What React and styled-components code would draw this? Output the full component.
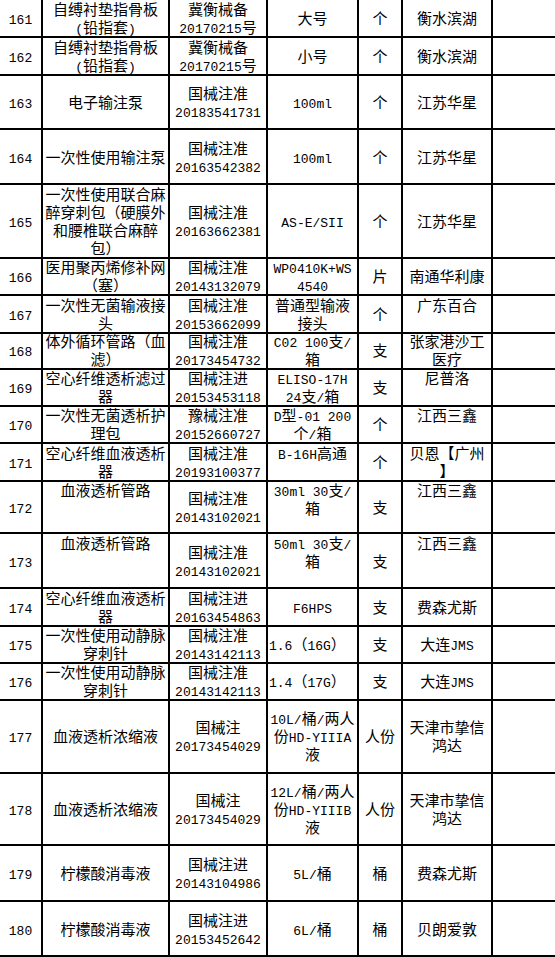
import React from "react";
import styled, { createGlobalStyle } from "styled-components";

const GlobalStyle = createGlobalStyle`
  body {
    margin: 0;
    background: #fff;
  }
`;

const Sheet = styled.div`
  width: 555px;
  overflow: hidden;
  font-family: "Noto Sans CJK SC", sans-serif;
  font-size: 15px;
  line-height: 18px;
  color: #000;
`;

const Row = styled.div`
  display: grid;
  grid-template-columns: 43px 127px 98px 91px 44px 90px 1fr;
  height: ${({ $h }) => $h}px;
`;

const Cell = styled.div`
  display: flex;
  flex-direction: column;
  justify-content: ${({ $top }) => ($top ? "flex-start" : "center")};
  box-sizing: border-box;
  border-bottom: 2px solid #000;
  border-right: 2px solid #000;
  padding: ${({ $left }) => ($left ? "0 0 0 1px" : "0")};
  min-width: 0;

  &:last-child {
    border-right: none;
  }
`;

const Text = styled.div`
  white-space: pre;
  line-height: 18px;
  text-align: ${({ $left }) => ($left ? "left" : "center")};
`;

const Latin = styled.span`
  font-family: "Liberation Mono", monospace;
  font-size: 13px;
  line-height: 13px;
`;

const mix = (text) =>
  text
    .split(/([\x20-\x7e]+)/)
    .filter(Boolean)
    .map((part, i) =>
      /^[\x20-\x7e]+$/.test(part) ? <Latin key={i}>{part}</Latin> : part
    );

// [no, name, reg, spec, unit, maker], h = row height, top = columns aligned to top
const rows = [
  { h: 38, c: ["161", "自缚衬垫指骨板\n(铅指套)", "冀衡械备\n20170215号", "大号", "个", "衡水滨湖"] },
  { h: 37, c: ["162", "自缚衬垫指骨板\n(铅指套)", "冀衡械备\n20170215号", "小号", "个", "衡水滨湖"] },
  { h: 55, c: ["163", "电子输注泵", "国械注准\n20183541731", "100ml", "个", "江苏华星"] },
  { h: 55, c: ["164", "一次性使用输注泵", "国械注准\n20163542382", "100ml", "个", "江苏华星"] },
  {
    h: 73,
    c: ["165", "一次性使用联合麻\n醉穿刺包（硬膜外\n和腰椎联合麻醉\n包）", "国械注准\n20163662381", "AS-E/SII", "个", "江苏华星"],
  },
  { h: 38, c: ["166", "医用聚丙烯修补网\n（塞）", "国械注准\n20143132079", "WP0410K+WS\n4540", "片", "南通华利康"] },
  { h: 36, c: ["167", "一次性无菌输液接\n头", "国械注准\n20153662099", "普通型输液\n接头", "个", "广东百合"], top: [5] },
  { h: 37, c: ["168", "体外循环管路（血\n滤）", "国械注准\n20173454732", "C02 100支/\n箱", "支", "张家港沙工\n医疗"] },
  { h: 37, c: ["169", "空心纤维透析滤过\n器", "国械注进\n20153453118", "ELISO-17H\n24支/箱", "支", "尼普洛"], top: [5] },
  { h: 38, c: ["170", "一次性无菌透析护\n理包", "豫械注准\n20152660727", "D型-01 200\n个/箱", "个", "江西三鑫"], top: [5] },
  { h: 37, c: ["171", "空心纤维血液透析\n器", "国械注准\n20193100377", "B-16H高通", "个", "贝恩【广州\n】"], top: [3] },
  { h: 53, c: ["172", "血液透析管路", "国械注准\n20143102021", "30ml 30支/\n箱", "支", "江西三鑫"], top: [1, 3, 5] },
  { h: 55, c: ["173", "血液透析管路", "国械注准\n20143102021", "50ml 30支/\n箱", "支", "江西三鑫"], top: [1, 3, 5] },
  { h: 37, c: ["174", "空心纤维血液透析\n器", "国械注进\n20163454863", "F6HPS", "支", "费森尤斯"] },
  { h: 37, c: ["175", "一次性使用动静脉\n穿刺针", "国械注准\n20143142113", "1.6（16G）", "支", "大连JMS"], left: [3] },
  { h: 37, c: ["176", "一次性使用动静脉\n穿刺针", "国械注准\n20143142113", "1.4（17G）", "支", "大连JMS"], left: [3] },
  { h: 74, c: ["177", "血液透析浓缩液", "国械注\n20173454029", "10L/桶/两人\n份HD-YIIIA\n液", "人份", "天津市挚信\n鸿达"] },
  { h: 72, c: ["178", "血液透析浓缩液", "国械注\n20173454029", "12L/桶/两人\n份HD-YIIIB\n液", "人份", "天津市挚信\n鸿达"] },
  { h: 56, c: ["179", "柠檬酸消毒液", "国械注进\n20143104986", "5L/桶", "桶", "费森尤斯"] },
  { h: 55, c: ["180", "柠檬酸消毒液", "国械注进\n20153452642", "6L/桶", "桶", "贝朗爱敦"] },
];

const App = () => {
  return (
    <>
      <GlobalStyle />
      <Sheet>
        {rows.map((row) => (
          <Row key={row.c[0]} $h={row.h}>
            {row.c.map((text, i) => {
              const top = row.top && row.top.includes(i);
              const left = row.left && row.left.includes(i);
              return (
                <Cell key={i} $top={top} $left={left}>
                  <Text $left={left}>{mix(text)}</Text>
                </Cell>
              );
            })}
            <Cell />
          </Row>
        ))}
      </Sheet>
    </>
  );
};

export default App;
